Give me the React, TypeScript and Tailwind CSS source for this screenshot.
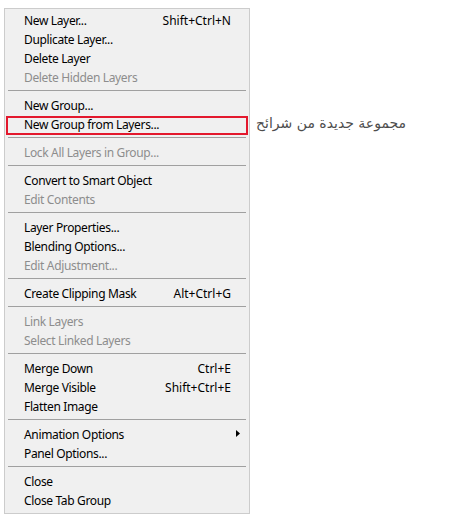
import React from 'react';

type Item = {
  label: string;
  shortcut?: string;
  disabled?: boolean;
  submenu?: boolean;
  marked?: boolean;
};

// groups of the layers panel flyout menu, split by separators
const groups: Item[][] = [
  [
    { label: 'New Layer...', shortcut: 'Shift+Ctrl+N' },
    { label: 'Duplicate Layer...' },
    { label: 'Delete Layer' },
    { label: 'Delete Hidden Layers', disabled: true },
  ],
  [
    { label: 'New Group...' },
    { label: 'New Group from Layers...', marked: true },
  ],
  [{ label: 'Lock All Layers in Group...', disabled: true }],
  [
    { label: 'Convert to Smart Object' },
    { label: 'Edit Contents', disabled: true },
  ],
  [
    { label: 'Layer Properties...' },
    { label: 'Blending Options...' },
    { label: 'Edit Adjustment...', disabled: true },
  ],
  [{ label: 'Create Clipping Mask', shortcut: 'Alt+Ctrl+G' }],
  [
    { label: 'Link Layers', disabled: true },
    { label: 'Select Linked Layers', disabled: true },
  ],
  [
    { label: 'Merge Down', shortcut: 'Ctrl+E' },
    { label: 'Merge Visible', shortcut: 'Shift+Ctrl+E' },
    { label: 'Flatten Image' },
  ],
  [
    { label: 'Animation Options', submenu: true },
    { label: 'Panel Options...' },
  ],
  [{ label: 'Close' }, { label: 'Close Tab Group' }],
];

const MenuRow = ({ item }: { item: Item }) => (
  <div
    className={`relative flex h-[19px] items-center justify-between pl-[19px] pr-[18px] ${
      item.disabled ? 'text-[#8d8d8d]' : 'text-black'
    }`}
  >
    <span>{item.label}</span>
    {item.shortcut && <span className="tracking-normal">{item.shortcut}</span>}
    {item.submenu && (
      <svg
        className="absolute right-[9px] top-[5px]"
        width="4"
        height="7"
        viewBox="0 0 4 7"
      >
        <path d="M0 0 L4 3.5 L0 7 Z" fill="#000" />
      </svg>
    )}
    {item.marked && (
      <>
        <div className="pointer-events-none absolute inset-x-[1px] top-[1px] bottom-[-1px] border-2 border-[#e3182d]" />
        <span
          className="absolute left-[calc(100%+7px)] top-[1px] whitespace-nowrap text-[14px] tracking-normal text-[#4d4d4d]"
          style={{ fontFamily: '"DejaVu Sans", sans-serif' }}
          dir="rtl"
        >
          مجموعة جديدة من شرائح
        </span>
      </>
    )}
  </div>
);

export default function App() {
  return (
    <div className="h-[522px] w-full bg-white pl-[4px] pt-[8px]">
      <div
        className="w-[246px] border border-[#cccccc] bg-[#f0f0f0] pb-[3px] pt-[2px] text-[12px] leading-none tracking-[-0.35px]"
        style={{ fontFamily: '"Noto Sans", "Open Sans", sans-serif' }}
      >
        {groups.map((group, gi) => (
          <div key={gi}>
            {gi > 0 && <div className="mx-[3px] mb-[5px] mt-[3px] h-px bg-[#a0a0a0]" />}
            {group.map((item) => (
              <MenuRow key={item.label} item={item} />
            ))}
          </div>
        ))}
      </div>
    </div>
  );
}
